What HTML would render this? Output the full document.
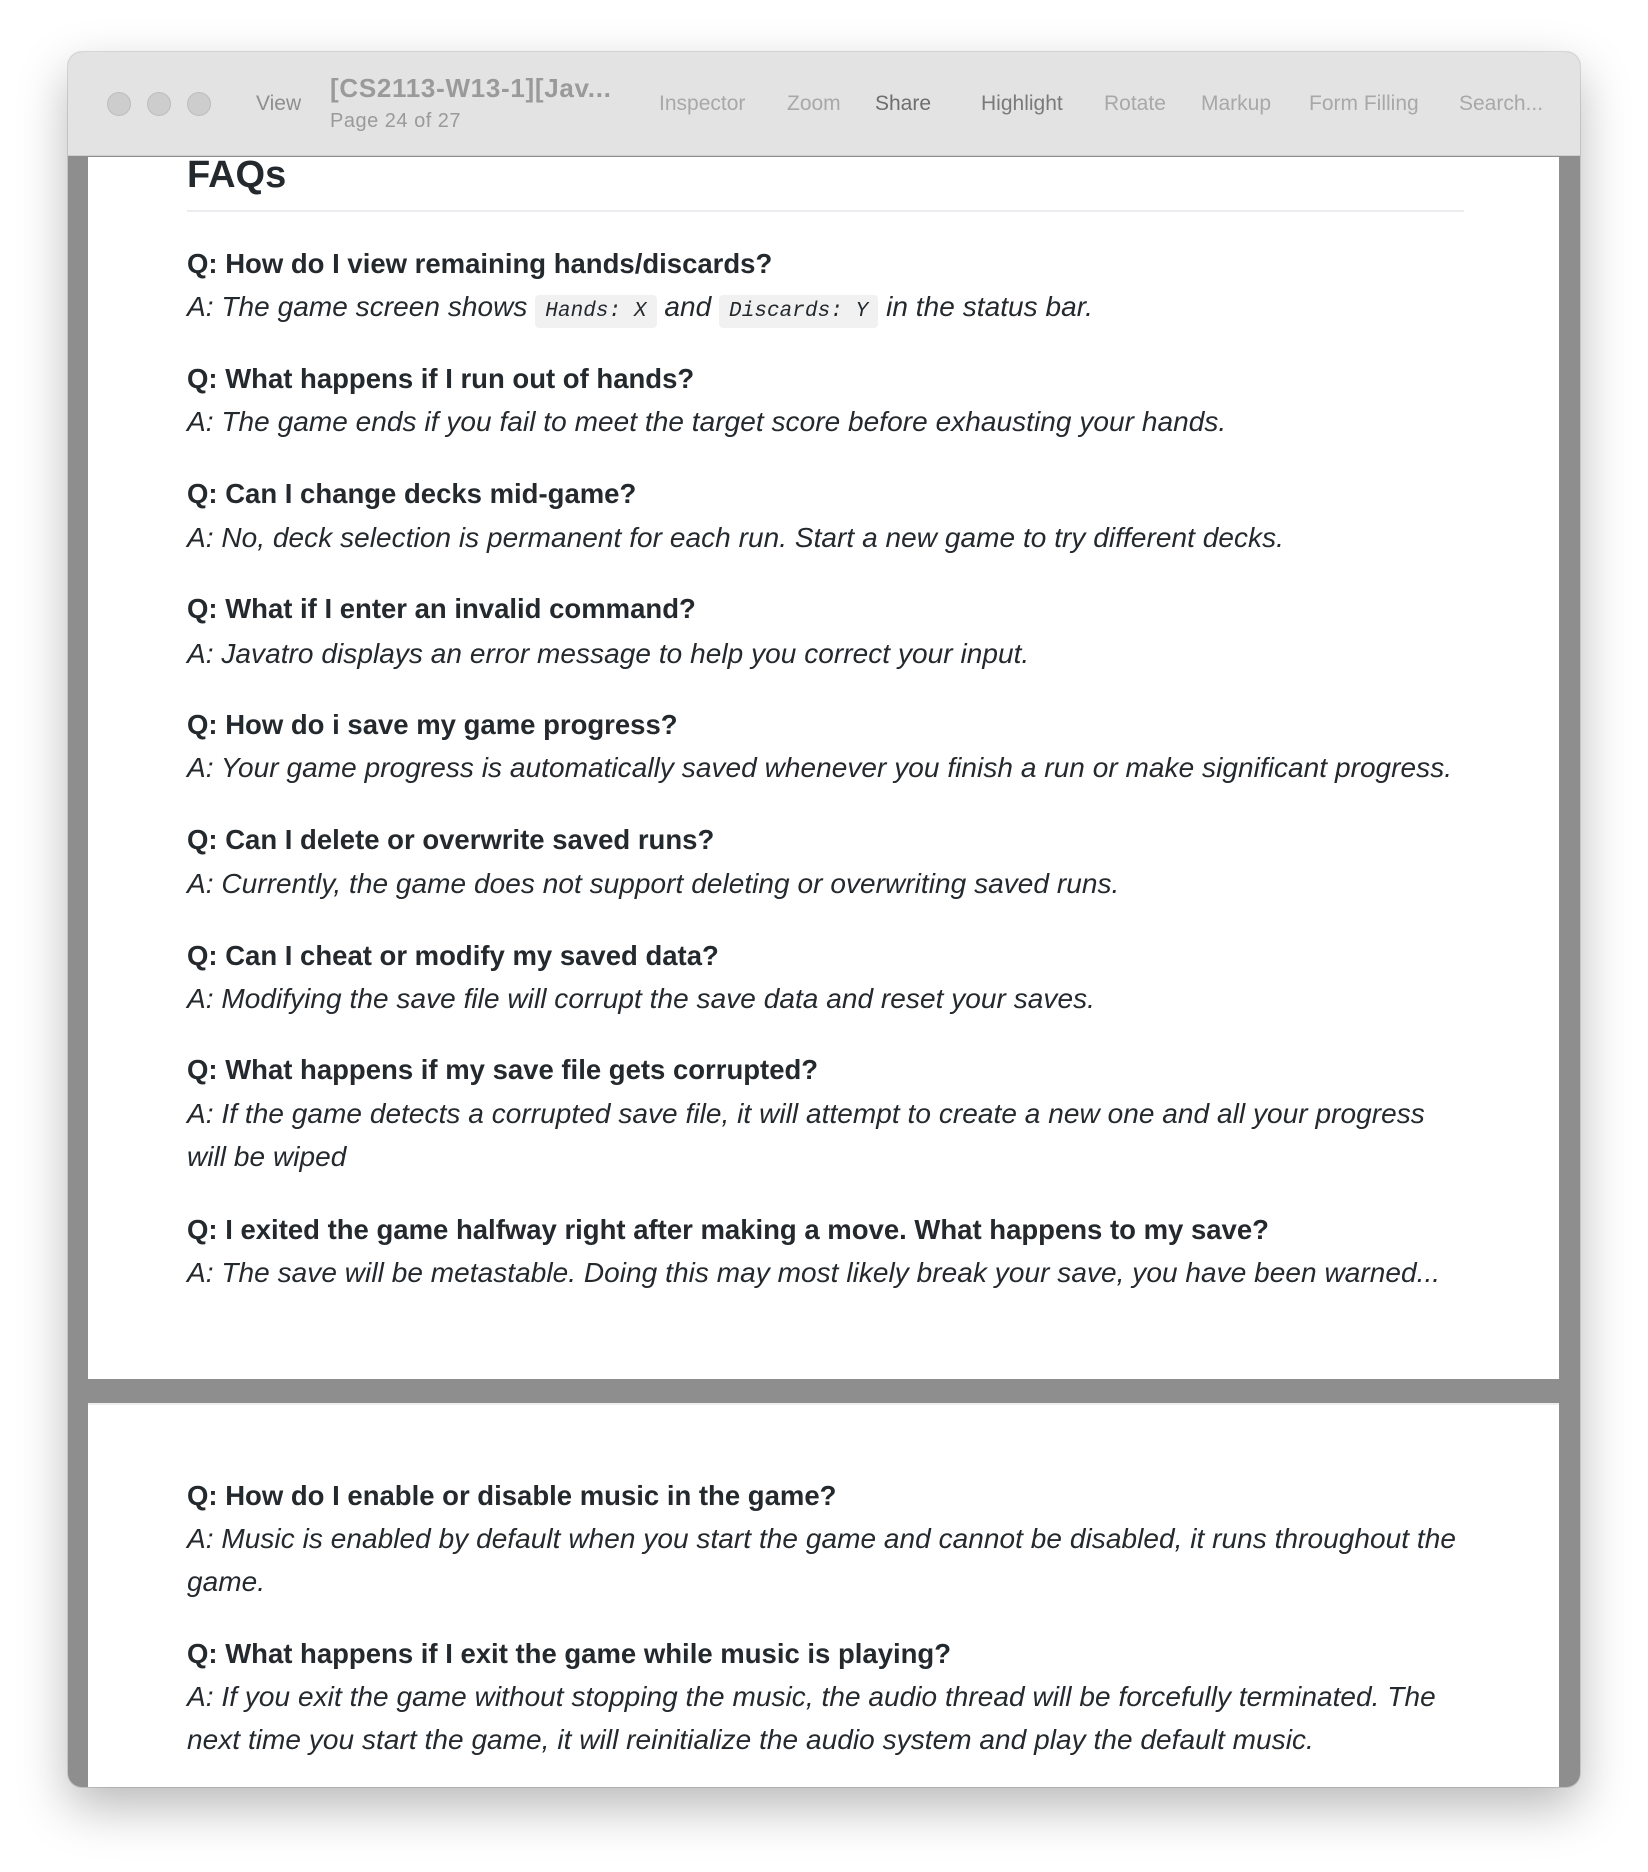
<!DOCTYPE html>
<html><head><meta charset="utf-8"><style>
*{margin:0;padding:0;box-sizing:border-box}
body{width:1648px;height:1872px;background:#fff;position:relative;overflow:hidden;font-family:"Liberation Sans",sans-serif}
.win{position:absolute;left:68px;top:52px;width:1512px;height:1735px;border-radius:14px;background:#8e8e8e;overflow:hidden;box-shadow:0 20px 50px rgba(0,0,0,.28),0 0 0 1px rgba(0,0,0,.12)}
.tb{position:absolute;left:0;top:0;width:1512px;height:104px;background:#e3e3e3;border-bottom:1px solid #cfcfcf}
.dot{position:absolute;top:40px;width:24px;height:24px;border-radius:50%;background:#cdcdcd;border:1px solid #bdbdbd}
.tl{position:absolute;font-size:21px;color:#a8a8a8;line-height:24px}
.l{position:absolute;left:99px;line-height:43px;color:#24292e;white-space:nowrap}
.q{font-weight:bold;font-size:27.5px}
.a{font-style:italic;font-size:28px;letter-spacing:0.05px}
code{font-family:"Liberation Mono",monospace;font-style:italic;font-size:21px;background:#f1f1f1;border-radius:4px;padding:5px 10px}
</style></head><body>
<div class="win">
<div class="tb">
<div class="dot" style="left:39px"></div><div class="dot" style="left:79px"></div><div class="dot" style="left:119px"></div>
<div class="tl" style="left:188px;top:40px;color:#8e8e8e">View</div>
<div class="tl" style="left:262px;top:24px;font-weight:bold;font-size:26px;letter-spacing:0.7px;color:#9a9a9a">[CS2113-W13-1][Jav...</div>
<div class="tl" style="left:262px;top:57px;font-size:20px;letter-spacing:0.5px;color:#9a9a9a">Page 24 of 27</div>
<div class="tl" style="left:591px;top:40px">Inspector</div>
<div class="tl" style="left:719px;top:40px">Zoom</div>
<div class="tl" style="left:807px;top:40px;color:#6e6e6e">Share</div>
<div class="tl" style="left:913px;top:40px;color:#7a7a7a">Highlight</div>
<div class="tl" style="left:1036px;top:40px">Rotate</div>
<div class="tl" style="left:1133px;top:40px">Markup</div>
<div class="tl" style="left:1241px;top:40px">Form Filling</div>
<div class="tl" style="left:1391px;top:40px">Search...</div>
</div>
</div>
<div style="position:absolute;left:88px;top:157px;width:1471px;height:1222px;background:#fff"></div>
<div style="position:absolute;left:88px;top:1403px;width:1471px;height:384px;background:#fff;border-top:2px solid #eee"></div>
<div style="position:absolute;left:187px;top:152px;font-size:38px;font-weight:bold;color:#24292e;line-height:46px">FAQs</div>
<div style="position:absolute;left:187px;top:210px;width:1277px;height:2px;background:#eaecef"></div>
<div style="position:absolute;left:0;top:0">
<div class="l q" style="left:187px;top:242px">Q: How do I view remaining hands/discards?</div>
<div class="l a" style="left:187px;top:285px">A: The game screen shows <code>Hands: X</code> and <code>Discards: Y</code> in the status bar.</div>
<div class="l q" style="left:187px;top:357px">Q: What happens if I run out of hands?</div>
<div class="l a" style="left:187px;top:400px">A: The game ends if you fail to meet the target score before exhausting your hands.</div>
<div class="l q" style="left:187px;top:472px">Q: Can I change decks mid-game?</div>
<div class="l a" style="left:187px;top:516px">A: No, deck selection is permanent for each run. Start a new game to try different decks.</div>
<div class="l q" style="left:187px;top:587px">Q: What if I enter an invalid command?</div>
<div class="l a" style="left:187px;top:632px">A: Javatro displays an error message to help you correct your input.</div>
<div class="l q" style="left:187px;top:703px">Q: How do i save my game progress?</div>
<div class="l a" style="left:187px;top:746px">A: Your game progress is automatically saved whenever you finish a run or make significant progress.</div>
<div class="l q" style="left:187px;top:818px">Q: Can I delete or overwrite saved runs?</div>
<div class="l a" style="left:187px;top:862px">A: Currently, the game does not support deleting or overwriting saved runs.</div>
<div class="l q" style="left:187px;top:934px">Q: Can I cheat or modify my saved data?</div>
<div class="l a" style="left:187px;top:977px">A: Modifying the save file will corrupt the save data and reset your saves.</div>
<div class="l q" style="left:187px;top:1048px">Q: What happens if my save file gets corrupted?</div>
<div class="l a" style="left:187px;top:1092px">A: If the game detects a corrupted save file, it will attempt to create a new one and all your progress</div>
<div class="l a" style="left:187px;top:1135px">will be wiped</div>
<div class="l q" style="left:187px;top:1208px">Q: I exited the game halfway right after making a move. What happens to my save?</div>
<div class="l a" style="left:187px;top:1251px">A: The save will be metastable. Doing this may most likely break your save, you have been warned...</div>
<div class="l q" style="left:187px;top:1474px">Q: How do I enable or disable music in the game?</div>
<div class="l a" style="left:187px;top:1517px">A: Music is enabled by default when you start the game and cannot be disabled, it runs throughout the</div>
<div class="l a" style="left:187px;top:1560px">game.</div>
<div class="l q" style="left:187px;top:1632px">Q: What happens if I exit the game while music is playing?</div>
<div class="l a" style="left:187px;top:1675px">A: If you exit the game without stopping the music, the audio thread will be forcefully terminated. The</div>
<div class="l a" style="left:187px;top:1718px">next time you start the game, it will reinitialize the audio system and play the default music.</div>
</div>
</body></html>
